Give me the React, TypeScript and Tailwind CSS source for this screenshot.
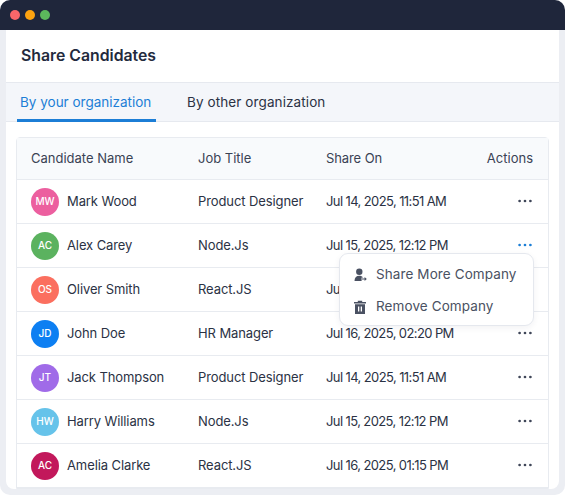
import React from "react";

const rows = [
  { i: "MW", name: "Mark Wood", job: "Product Designer", date: "Jul 14, 2025, 11:51 AM", color: "bg-[#ec5f9f]" },
  { i: "AC", name: "Alex Carey", job: "Node.Js", date: "Jul 15, 2025, 12:12 PM", color: "bg-[#5bb25f]", active: true },
  { i: "OS", name: "Oliver Smith", job: "React.JS", date: "Jul 16, 2025, 01:15 PM", color: "bg-[#fb6f5f]" },
  { i: "JD", name: "John Doe", job: "HR Manager", date: "Jul 16, 2025, 02:20 PM", color: "bg-[#0d7ff2]" },
  { i: "JT", name: "Jack Thompson", job: "Product Designer", date: "Jul 14, 2025, 11:51 AM", color: "bg-[#a06be8]" },
  { i: "HW", name: "Harry Williams", job: "Node.Js", date: "Jul 15, 2025, 12:12 PM", color: "bg-[#66c3ea]" },
  { i: "AC", name: "Amelia Clarke", job: "React.JS", date: "Jul 16, 2025, 01:15 PM", color: "bg-[#c2185b]" },
];

function Dots({ active }: { active?: boolean }) {
  return (
    <svg width="15" height="4" viewBox="0 0 15 4" className={active ? "text-[#1c7ed6] justify-self-end -translate-y-[1px]" : "text-[#3f4658] justify-self-end -translate-y-[1px]"} fill="currentColor">
      <circle cx="1.6" cy="2" r="1.35" />
      <circle cx="7" cy="2" r="1.35" />
      <circle cx="12.4" cy="2" r="1.35" />
    </svg>
  );
}

export default function App() {
  return (
    <div className="w-[565px] h-[495px] overflow-hidden bg-white text-[#2b3244] font-['Inter','Liberation_Sans',sans-serif]">
      <div className="h-full flex flex-col bg-[#eceef3] rounded-[10px] overflow-hidden">
        <div className="h-[30px] shrink-0 bg-[#1f263b] flex items-center gap-[5px] pl-[10px]">
          <span className="w-[10px] h-[10px] rounded-full bg-[#f9666a]" />
          <span className="w-[10px] h-[10px] rounded-full bg-[#fca310]" />
          <span className="w-[10px] h-[10px] rounded-full bg-[#5cb85c]" />
        </div>
        <div className="relative mx-[6px] h-[459px] shrink-0 bg-white rounded-b-[8px] overflow-hidden">
          <div className="h-[52px] flex items-center pl-[15px] text-[15.8px] font-semibold text-[#232a3d]">
            Share Candidates
          </div>
          <div className="h-[40px] flex bg-[#f4f6fa] border-y border-[#e6e9ef] pl-[11px] text-[13.5px]">
            <div className="w-[139px] h-[39px] pl-[3px] pt-[9px] text-[#1c7ed6] border-b-[3px] border-[#1c7ed6]">
              By your organization
            </div>
            <div className="ml-[31px] pt-[9px] tracking-[0.1px] text-[#2b3244]">By other organization</div>
          </div>
          <div className="mx-[10px] mt-[15px] border border-[#e8ebf0] rounded-t-[4px] text-[13px]">
            <div className="h-[42px] grid grid-cols-[167px_128px_1fr_auto] items-center pl-[14px] pr-[15px] bg-[#f8fafc] border-b border-[#e8ebf0] text-[#3a4254]">
              <span>Candidate Name</span>
              <span>Job Title</span>
              <span className="tracking-[-0.1px]">Share On</span>
              <span>Actions</span>
            </div>
            {rows.map((r, idx) => (
              <div
                key={idx}
                className="h-[44px] grid grid-cols-[167px_128px_1fr_auto] items-center pl-[14px] pr-[15px] border-b border-[#e8ebf0]"
              >
                <div className="flex items-center gap-[8px]">
                  <span className={`w-[28px] h-[28px] rounded-full flex items-center justify-center text-white text-[10px] font-medium ${r.color}`}>
                    {r.i}
                  </span>
                  <span className="tracking-[-0.1px]">{r.name}</span>
                </div>
                <span className="tracking-[-0.1px]">{r.job}</span>
                <span className="tracking-[-0.6px]">{r.date}</span>
                <Dots active={r.active} />
              </div>
            ))}
          </div>
          <div className="absolute left-[333px] top-[223px] w-[195px] h-[73px] bg-white border border-[#e5e8ee] rounded-[9px] shadow-[0_2px_6px_rgba(30,40,60,0.06)] flex flex-col justify-center gap-[12px] pl-[13px] text-[13.5px] text-[#4a5162]">
            <div className="flex items-center gap-[9px] h-[20px] translate-y-[1px]">
              <svg width="14" height="14" viewBox="0 0 14 14" fill="#4a5162">
                <circle cx="6.3" cy="3.8" r="3.2" />
                <path d="M1.5 13c0-3.4 2-5.3 4.8-5.3 1.6 0 3 .6 3.8 1.7H8.6v3.6H1.5z" />
                <path d="M9 10.4h2.6V9l2.2 2-2.2 2v-1.4H9z" />
              </svg>
              <span className="tracking-[0.1px]">Share More Company</span>
            </div>
            <div className="flex items-center gap-[9px] h-[20px] translate-y-[1px]">
              <svg width="14" height="14" viewBox="0 0 14 14" fill="#4a5162">
                <path d="M1 2h3.8V.8h4.4V2H13v1.5H1z" />
                <path fillRule="evenodd" d="M2 4.3h10V14H2zM5 6.5v5h1.3v-5zM7.7 6.5v5H9v-5z" />
              </svg>
              <span className="tracking-[0.1px]">Remove Company</span>
            </div>
          </div>
        </div>
      </div>
    </div>
  );
}
